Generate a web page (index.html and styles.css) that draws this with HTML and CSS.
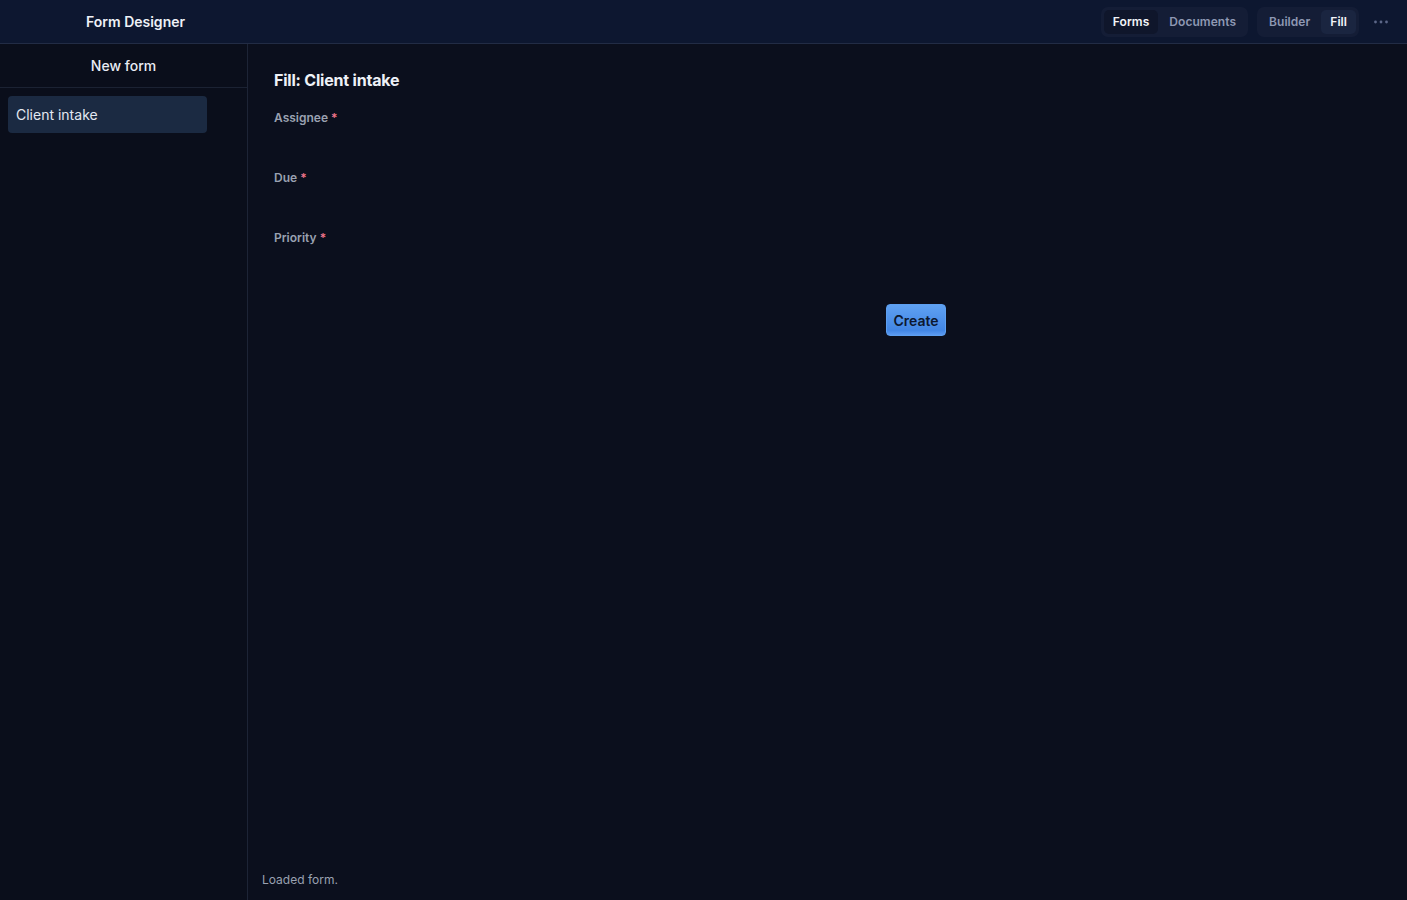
FILE: index.html
```html
<!DOCTYPE html>
<html lang="en">
<head>
    <meta charset="UTF-8">
    <meta name="viewport" content="width=device-width, initial-scale=1.0">
    <title>Form Designer</title>
    <link rel="stylesheet" href="styles.css">
</head>
<body>
    <header class="topbar">
        <div class="brand">Form Designer</div>
        <nav class="topnav">
            <div class="seg">
                <span class="seg-item active">Forms</span>
                <span class="seg-item">Documents</span>
            </div>
            <div class="seg">
                <span class="seg-item">Builder</span>
                <span class="seg-item active-light">Fill</span>
            </div>
            <span class="more">
                <svg width="14" height="4" viewBox="0 0 14 4">
                    <circle cx="1.5" cy="2" r="1.4" fill="#5c6788"/>
                    <circle cx="7" cy="2" r="1.4" fill="#5c6788"/>
                    <circle cx="12.5" cy="2" r="1.4" fill="#5c6788"/>
                </svg>
            </span>
        </nav>
    </header>

    <div class="layout">
        <aside class="sidebar">
            <div class="new-form">New form</div>
            <ul class="form-list">
                <li class="form-item selected">Client intake</li>
            </ul>
        </aside>

        <main class="main">
            <div class="content">
                <h1 class="title">Fill: Client intake</h1>
                <div class="field">
                    <label>Assignee <span class="req">*</span></label>
                </div>
                <div class="field">
                    <label>Due <span class="req">*</span></label>
                </div>
                <div class="field">
                    <label>Priority <span class="req">*</span></label>
                </div>
                <div class="actions">
                    <button class="btn-create">Create</button>
                </div>
            </div>
            <div class="status">Loaded form.</div>
        </main>
    </div>
</body>
</html>
```

FILE: styles.css
```css
* {
    box-sizing: border-box;
}
html, body {
    height: 100%;
}
body {
    margin: 0;
    font-family: "Inter", "Noto Sans", sans-serif;
    background-color: #0b0f1d;
    color: #e8ecf4;
    display: flex;
    flex-direction: column;
}
.topbar {
    height: 44px;
    flex-shrink: 0;
    display: flex;
    align-items: center;
    justify-content: space-between;
    background-color: #0d1730;
    border-bottom: 1px solid #222c45;
    padding: 0 19px 0 86px;
}
.brand {
    font-size: 14px;
    font-weight: 600;
    color: #eef1f7;
}
.topnav {
    display: flex;
    align-items: center;
}
.seg {
    display: flex;
    gap: 2px;
    padding: 3px;
    background-color: #141d36;
    border-radius: 7px;
    margin-left: 9px;
}
.seg-item {
    font-size: 12px;
    font-weight: 600;
    color: #8e98b3;
    padding: 6px 9px;
    border-radius: 5px;
    line-height: 12px;
    letter-spacing: 0.05px;
}
.seg-item.active {
    background-color: #0f162b;
    color: #f2f4f8;
}
.seg-item.active-light {
    background-color: #1a2540;
    color: #f2f4f8;
}
.more {
    margin-left: 15px;
    display: flex;
    align-items: center;
    height: 14px;
}
.layout {
    flex: 1;
    display: flex;
    min-height: 0;
}
.sidebar {
    width: 248px;
    flex-shrink: 0;
    background-color: #0a0e1b;
    border-right: 1px solid #1d2436;
}
.new-form {
    height: 44px;
    display: flex;
    align-items: center;
    justify-content: center;
    font-size: 14px;
    font-weight: 500;
    color: #e8ecf4;
    border-bottom: 1px solid #1b2233;
}
.form-list {
    list-style: none;
    margin: 0;
    padding: 8px;
}
.form-item {
    width: 199px;
    height: 37px;
    display: flex;
    align-items: center;
    padding: 0 8px;
    font-size: 14px;
    color: #e3e8f1;
    border-radius: 4px;
}
.form-item.selected {
    background-color: #1b2a42;
}
.main {
    flex: 1;
    display: flex;
    flex-direction: column;
    background-color: #0b0f1d;
}
.content {
    flex: 1;
    width: 698px;
    padding: 26px 0 0 26px;
}
.title {
    margin: 0 0 20px;
    font-size: 16px;
    font-weight: 700;
    color: #eef1f7;
    line-height: 20px;
    letter-spacing: -0.2px;
}
.field {
    height: 60px;
}
.field label {
    display: block;
    font-size: 12px;
    font-weight: 600;
    color: #9aa1b1;
    line-height: 16px;
}
.req {
    color: #f0748a;
}
.actions {
    display: flex;
    justify-content: flex-end;
    margin-top: 14px;
}
.btn-create {
    width: 60px;
    height: 32px;
    border: 1px solid #5d9ff0;
    border-radius: 4px;
    background: linear-gradient(#5fa1f2, #4286e4 85%, #5b9af0);
    color: #0c1830;
    font-family: inherit;
    font-size: 14px;
    font-weight: 600;
    padding: 0;
}
.status {
    padding: 0 0 13px 14px;
    font-size: 12px;
    color: #9aa1b1;
}
```
